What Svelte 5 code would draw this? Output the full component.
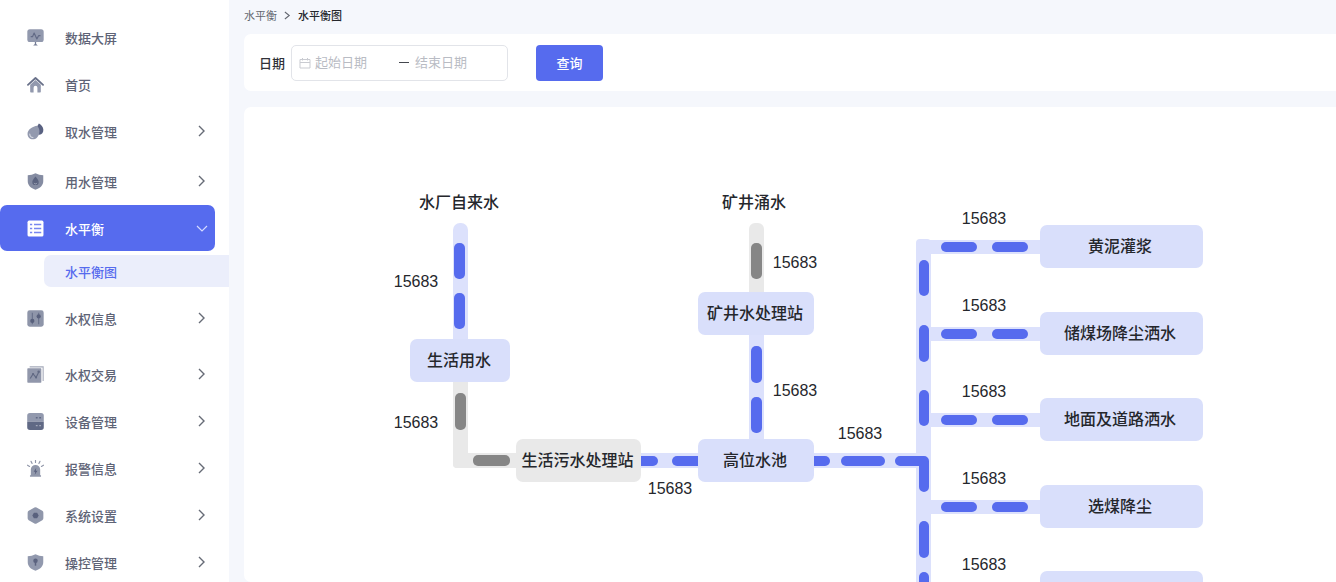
<script>
  const before = [
    { name: '数据大屏', icon: 'screen' },
    { name: '首页', icon: 'home' },
    { name: '取水管理', icon: 'drops', more: true },
    { name: '用水管理', icon: 'shieldDrop', more: true, group: true },
  ];
  const after = [
    { name: '水权信息', icon: 'sliders', more: true },
    { name: '水权交易', icon: 'trade', more: true, spaced: true },
    { name: '设备管理', icon: 'device', more: true },
    { name: '报警信息', icon: 'alarm', more: true },
    { name: '系统设置', icon: 'hexagon', more: true },
    { name: '操控管理', icon: 'shieldLock', more: true },
  ];

  const pipes = [
    { x: 453, y: 223, w: 15, h: 124, r: 7 },
    { x: 453, y: 374, w: 15, h: 94, r: 4, idle: true },
    { x: 453, y: 453, w: 70, h: 15, r: 4, idle: true },
    { x: 749, y: 223, w: 15, h: 76, r: 6, idle: true },
    { x: 749, y: 328, w: 15, h: 118, r: 0 },
    { x: 635, y: 453, w: 70, h: 15, r: 0 },
    { x: 806, y: 453, w: 116, h: 15, r: 0 },
    { x: 916, y: 239, w: 15, h: 380, r: 4 },
  ];

  const flows = [
    { x: 454, y: 243, w: 11, h: 36 },
    { x: 454, y: 293, w: 11, h: 36 },
    { x: 455, y: 393, w: 11, h: 37, idle: true },
    { x: 473, y: 455, w: 37, h: 11, idle: true },
    { x: 751, y: 243, w: 11, h: 36, idle: true },
    { x: 751, y: 346, w: 11, h: 37 },
    { x: 751, y: 397, w: 11, h: 36 },
    { x: 622, y: 456, w: 36, h: 10 },
    { x: 672, y: 456, w: 36, h: 10 },
    { x: 794, y: 456, w: 36, h: 10 },
    { x: 841, y: 456, w: 44, h: 10 },
    { x: 919, y: 260, w: 10, h: 36 },
    { x: 919, y: 325, w: 10, h: 37 },
    { x: 919, y: 390, w: 10, h: 36 },
    { x: 919, y: 521, w: 10, h: 37 },
    { x: 919, y: 572, w: 10, h: 37 },
  ];

  const nodes = [
    { x: 410, y: 339, w: 100, name: '生活用水' },
    { x: 516, y: 439, w: 125, name: '生活污水处理站', idle: true },
    { x: 698, y: 292, w: 116, name: '矿井水处理站' },
    { x: 698, y: 439, w: 116, name: '高位水池' },
  ];

  const outlets = [
    { y: 225, name: '黄泥灌浆' },
    { y: 312, name: '储煤场降尘洒水' },
    { y: 398, name: '地面及道路洒水' },
    { y: 485, name: '选煤降尘' },
    { y: 571, name: '' },
  ];

  const sources = [
    { x: 459, y: 202, name: '水厂自来水' },
    { x: 754, y: 202, name: '矿井涌水' },
  ];

  const readings = [
    { x: 416, y: 281 },
    { x: 416, y: 422 },
    { x: 795, y: 262 },
    { x: 795, y: 390 },
    { x: 670, y: 488 },
    { x: 860, y: 433 },
  ];
  const amount = 15683;
</script>

{#snippet glyph(kind)}
  <svg class="icon" viewBox="0 0 16 16" aria-hidden="true">
    {#if kind === 'screen'}
      <rect x="0.3" y="0.3" width="15.4" height="12" rx="2.4" fill="#9299ae" />
      <path d="M3.5 7.2h1.7L6.7 3.8l2.6 5.5 1.6-3h1.8" fill="none" stroke="#626a86" stroke-width="1.1" stroke-linejoin="round" />
      <path d="M7.4 12.3h1.2v1.8l1.6 1.4H5.8l1.6-1.4z" fill="#747c95" />
    {:else if kind === 'home'}
      <path d="M3 8.2 8 3.8l5 4.4v6.6a.7.7 0 0 1-.7.7H9.8V11a1.8 1.8 0 0 0-3.6 0v4.5H3.7a.7.7 0 0 1-.7-.7z" fill="#9299ae" />
      <path d="M.9 8.3 8 1.9l7.1 6.4" fill="none" stroke="#687089" stroke-width="1.7" stroke-linecap="round" stroke-linejoin="round" />
    {:else if kind === 'drops'}
      <path d="M11.2.4c2 .9 4.2 3.3 4.2 5.9 0 2.5-1.3 4.7-3.7 4.7-2.3 0-3.6-1.8-3.6-3.9C8.100 4.700 10 2.700 11.200.4z" fill="#596181" />
      <path d="M9.800 2.700c1.300 2 2.500 4.300 1.700 7.200-.8 3.200-3 5.500-6 5.500C2.500 15.400.5 13.200.5 10.400.5 6.300 5 3.200 9.800 2.700z" fill="#9299ae" />
      <path d="M2.600 10.300c.1 2 1.300 3.200 3 3.300" fill="none" stroke="#d5d8e2" stroke-width="1" stroke-linecap="round" />
    {:else if kind === 'shieldDrop' || kind === 'shieldLock'}
      <path d="M8 .2c2.300 1.200 4.700 1.800 7.300 1.900v5.700c0 3.700-2.900 6.500-7.300 8-4.400-1.500-7.300-4.300-7.300-8V2.100C3.300 2 5.700 1.400 8 .2z" fill={kind === 'shieldDrop' ? '#858ca2' : '#9299ae'} />
      {#if kind === 'shieldDrop'}
        <path d="M8 3.200c1.700 2 3 3.500 3 5.200a3 3 0 0 1-6 0c0-1.700 1.300-3.200 3-5.200z" fill="#5b637f" />
        <path d="M6.600 9.300a1.500 1.500 0 0 0 2.800 0" fill="none" stroke="#a9afbf" stroke-width=".8" />
      {:else}
        <circle cx="8" cy="6.300" r="2.100" fill="#5b637f" />
        <path d="M7.300 7h1.400v4H7.300z" fill="#5b637f" />
      {/if}
    {:else if kind === 'sliders'}
      <rect x="0.300" y="0.300" width="15.400" height="15.400" rx="2.200" fill="#8e95a9" />
      <path d="M5 2.600v10.800M11 2.600v10.800" stroke="#666e88" stroke-width="1" />
      <circle cx="5" cy="10.300" r="2" fill="#58607c" />
      <circle cx="11" cy="6" r="2" fill="#58607c" />
    {:else if kind === 'trade'}
      <path d="M2.500.8h12.700v13.400" fill="none" stroke="#a4a9b9" stroke-width="1" />
      <rect x="0.300" y="2.200" width="13.200" height="13.500" rx=".6" fill="#9197ab" />
      <path d="M3 11.800 5.700 7.500l2.800 3.300L11 5.800" fill="none" stroke="#626a84" stroke-width="1.100" />
      <circle cx="5.700" cy="7.500" r="1" fill="#626a84" /><circle cx="11" cy="5.500" r="1.200" fill="#626a84" /><circle cx="8.500" cy="10.800" r="1" fill="#626a84" />
    {:else if kind === 'device'}
      <path d="M3 .1h10A2.700 2.700 0 0 1 15.800 3v5.200H.2V3A2.700 2.700 0 0 1 3 .1z" fill="#9299ae" />
      <path d="M.2 8.200h15.600V13a2.700 2.700 0 0 1-2.800 2.900H3A2.700 2.700 0 0 1 .2 13z" fill="#606985" />
      <path d="M8.300 4.500h1.700M11.500 4.500h1.700" stroke="#606985" stroke-width="1.500" />
      <path d="M8.300 11.800h1.700M11.500 11.800h1.700" stroke="#a2a8b9" stroke-width="1.200" />
    {:else if kind === 'alarm'}
      <path d="M3.600 14.300V9a4.400 4.400 0 0 1 8.800 0v5.300h.8v1.500H2.800v-1.500z" fill="#9097aa" />
      <path d="M8.700 7.200 6.300 11h1.500l-.5 2.800L9.900 10H8.300z" fill="#59617d" />
      <path d="M8 .3v2M3.800 1.300l1 1.900M12.200 1.300l-1 1.900M.5 4.900l1.900 1.200M15.500 4.900l-1.900 1.200" stroke="#9298aa" stroke-width="1.100" stroke-linecap="round" />
    {:else if kind === 'hexagon'}
      <path d="M7 .5q1-.6 2 0l5.400 3.100q1 .6 1 1.700v5.400q0 1.100-1 1.700L9 15.500q-1 .6-2 0l-5.400-3.100q-1-.6-1-1.700V5.300q0-1.100 1-1.700z" fill="#9097ab" />
      <path d="m6.500 5.300h3L11 8l-1.500 2.700h-3L5 8z" fill="#59617d" />
    {:else if kind === 'list'}
      <rect x="0.500" y="0.500" width="15" height="15" rx="1.500" fill="#fff" />
      <path d="M2.800 4.200h2.100M2.800 8h2.100M2.800 11.800h2.100M6.600 4.200h6.800M6.600 8h6.800M6.600 11.800h6.800" stroke="#7787f0" stroke-width="1.300" />
    {/if}
  </svg>
{/snippet}

{#snippet row(item)}
  <li class:group={item.group} class:spaced={item.spaced}>
    <button class="item" type="button">
      {@render glyph(item.icon)}
      <span>{item.name}</span>
      {#if item.more}
        <svg class="arrow" viewBox="0 0 12 12" aria-hidden="true"><path d="M3 1l5 5-5 5" /></svg>
      {/if}
    </button>
  </li>
{/snippet}

<div class="app">
  <nav class="side">
    <ul>
      {#each before as item}{@render row(item)}{/each}
      <li>
        <button class="item active" type="button" aria-expanded="true">
          {@render glyph('list')}
          <span>水平衡</span>
          <svg class="arrow" viewBox="0 0 12 12" aria-hidden="true"><path d="M1 4l5 5 5-5" /></svg>
        </button>
        <a class="sub" href="#balance">水平衡图</a>
      </li>
      {#each after as item}{@render row(item)}{/each}
    </ul>
  </nav>

  <main>
    <div class="crumbs">
      <a href="#parent">水平衡</a>
      <svg viewBox="0 0 8 10" aria-hidden="true"><path d="M1 1l5 4-5 4" /></svg>
      <strong>水平衡图</strong>
    </div>

    <form class="filter card" onsubmit={(e) => e.preventDefault()}>
      <label for="start">日期</label>
      <div class="range">
        <svg viewBox="0 0 12 12" aria-hidden="true"><path d="M1 2.500h10v8.500H1zM1 5.500h10M3.500 1v2.500M8.500 1v2.500" /></svg>
        <input id="start" type="text" placeholder="起始日期" />
        <i></i>
        <input type="text" placeholder="结束日期" aria-label="结束日期" />
      </div>
      <button type="submit">查询</button>
    </form>

    <section class="board card">
      <svg class="diagram" width="1000" height="500" viewBox="244 107 1000 500" role="img" aria-label="水平衡图">
        {#each pipes as p}
          <rect class="pipe" class:idle={p.idle} x={p.x} y={p.y} width={p.w} height={p.h} rx={p.r} />
        {/each}
        {#each outlets as o}
          <rect class="pipe" x="924" y={o.y + 15} width="124" height="14" />
          <rect class="flow" x="941" y={o.y + 17} width="36" height="10" rx="5" />
          <rect class="flow" x="992" y={o.y + 17} width="36" height="10" rx="5" />
        {/each}
        {#each flows as f}
          <rect class="flow" class:idle={f.idle} x={f.x} y={f.y} width={f.w} height={f.h} rx="5" />
        {/each}
        <path class="bend" d="M900 461h24v26" />
        {#each nodes as n}
          <rect class="node" class:idle={n.idle} x={n.x} y={n.y} width={n.w} height="43" rx="7" />
          <text x={n.x + n.w / 2 - 1} y={n.y + 27}>{n.name}</text>
        {/each}
        {#each outlets as o}
          <rect class="node" x="1040" y={o.y} width="163" height="43" rx="7" />
          {#if o.name}<text x="1120" y={o.y + 27}>{o.name}</text>{/if}
          <text class="num" x="984" y={o.y - 1}>{amount}</text>
        {/each}
        {#each sources as s}
          <text x={s.x} y={s.y + 6}>{s.name}</text>
        {/each}
        {#each readings as r}
          <text class="num" x={r.x} y={r.y + 6}>{amount}</text>
        {/each}
      </svg>
    </section>
  </main>
</div>

<style>
  :global(body) { margin: 0; background: #f5f7fc; }
  .app {
    display: flex;
    height: 100vh;
    overflow: hidden;
    font-family: "Liberation Sans", "Noto Sans CJK SC", sans-serif;
    font-size: 13px;
    color: #303238;
  }
  button, input { font: inherit; }
  a { text-decoration: none; color: inherit; }
  .side { flex: 0 0 229px; background: #fff; padding-top: 14px; box-sizing: border-box; }
  ul { list-style: none; margin: 0; padding: 0; display: flex; flex-direction: column; gap: 1px; }
  .group { margin-top: 3px; }
  .spaced { margin-top: 9px; }
  .item {
    display: flex;
    align-items: center;
    width: 215px;
    height: 46px;
    padding: 0 7px 0 27px;
    border: 0;
    border-radius: 0 7px 7px 0;
    background: none;
    color: #5e6376;
    font-weight: 500;
    text-align: left;
  }
  .item span { flex: 1; margin-left: 21px; }
  .item.active { background: #566bee; color: #fff; border-radius: 7px; }
  .icon { width: 17px; height: 17px; }
  .arrow { width: 12px; height: 12px; fill: none; stroke: #666b76; stroke-width: 1.4; }
  .active .arrow { stroke: #d5dbff; stroke-width: 1.2; }
  .sub {
    display: flex;
    align-items: center;
    height: 32px;
    margin: 4px 0 7px 44px;
    padding-left: 21px;
    border-radius: 7px 0 0 7px;
    background: #ebeefb;
    color: #566bee;
    font-weight: 500;
  }
  main { flex: 1; min-width: 0; display: flex; flex-direction: column; padding-left: 15px; }
  .crumbs { display: flex; align-items: center; gap: 7px; height: 30px; margin-bottom: 4px; font-size: 11px; color: #62666f; }
  .crumbs svg { width: 7px; height: 9px; fill: none; stroke: #62666f; stroke-width: 1.2; }
  .crumbs strong { font-weight: 500; color: #25272c; }
  .card { background: #fff; border-radius: 7px 0 0 7px; }
  .filter { display: flex; align-items: center; height: 57px; padding-left: 15px; margin-bottom: 16px; }
  .filter label { font-weight: 500; }
  .range {
    display: flex;
    align-items: center;
    box-sizing: border-box;
    width: 217px;
    height: 36px;
    margin: 0 28px 0 6px;
    padding: 0 7px;
    border: 1px solid #e2e4e9;
    border-radius: 5px;
  }
  .range svg { width: 12px; height: 12px; margin-right: 4px; fill: none; stroke: #c9cbd1; flex: none; }
  .range input { width: 78px; min-width: 0; padding: 0; border: 0; outline: 0; background: none; }
  .range input:first-of-type { width: 84px; }
  .range input::placeholder { color: #b9bcc4; opacity: 1; }
  .range i { flex: none; width: 10px; height: 1px; margin-right: 6px; background: #44474e; }
  .filter button { width: 67px; height: 36px; padding: 0; border: 0; border-radius: 4px; background: #566bee; color: #fff; font-weight: 500; }
  .board { flex: 1; min-height: 0; overflow: hidden; }
  .diagram { display: block; }
  .pipe { fill: #dce1fc; }
  .flow { fill: #566bee; }
  .node { fill: #d9dffb; }
  .pipe.idle, .node.idle { fill: #e9e9e9; }
  .flow.idle { fill: #868686; }
  .bend { fill: none; stroke: #566bee; stroke-width: 10; stroke-linecap: round; stroke-linejoin: round; }
  text { font-size: 16px; font-weight: 500; fill: #25272c; text-anchor: middle; }
</style>
